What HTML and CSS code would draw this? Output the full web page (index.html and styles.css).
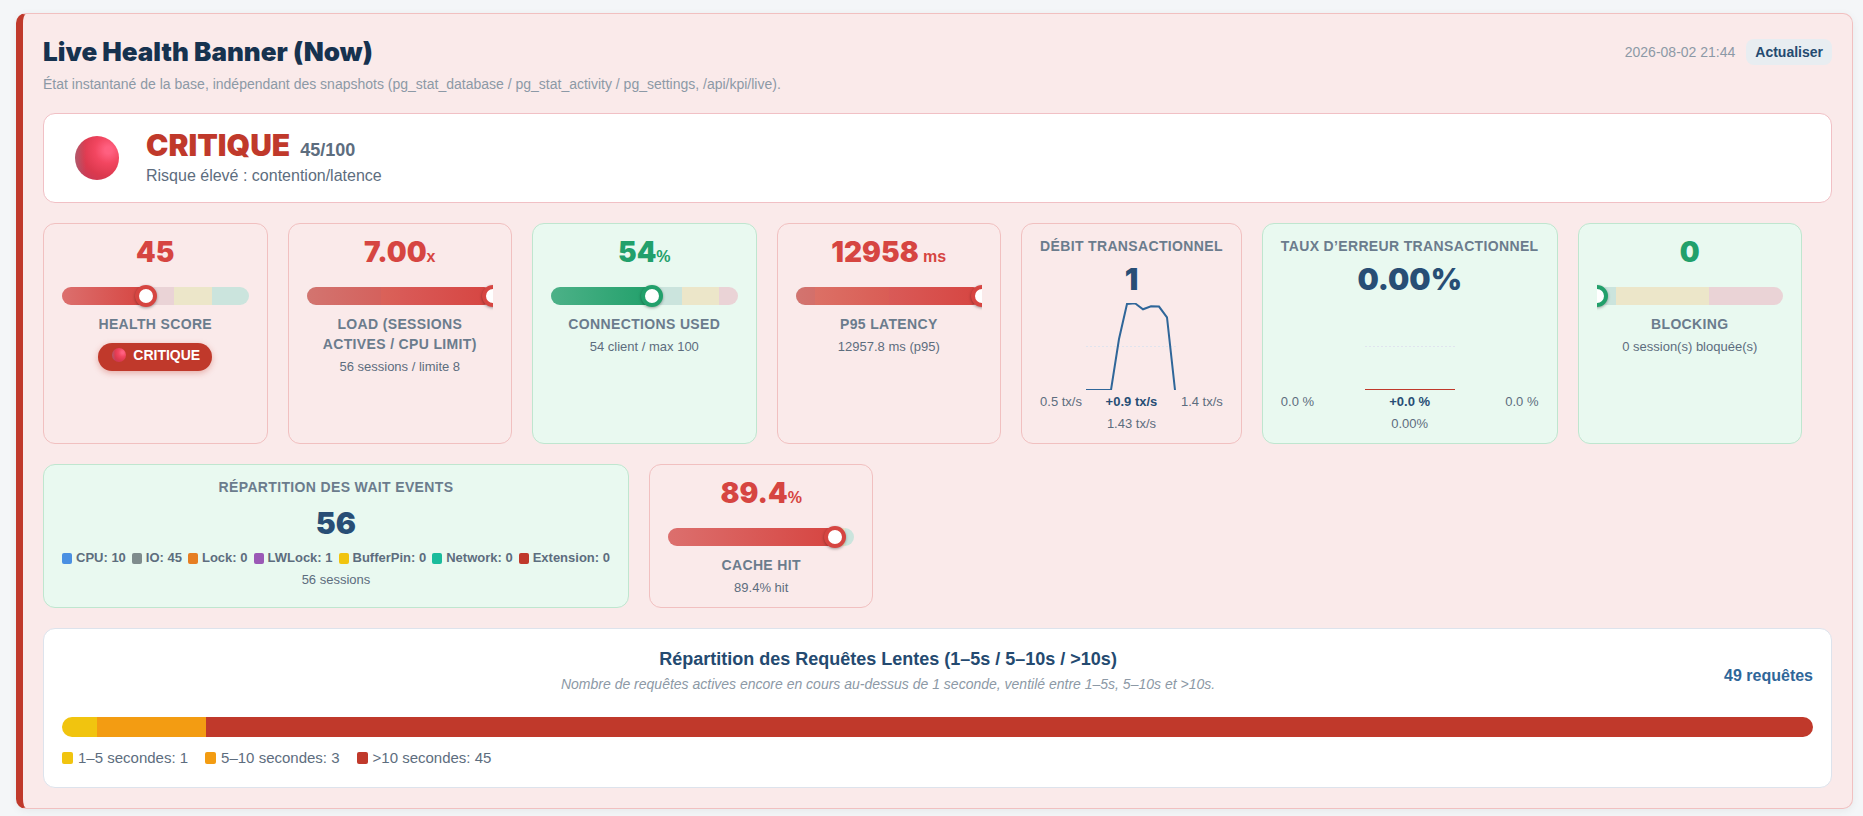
FILE: index.html
```html
<!DOCTYPE html>
<html lang="fr">
<head>
    <meta charset="UTF-8">
    <meta name="viewport" content="width=device-width, initial-scale=1.0">
    <title>Live Health Banner</title>
    <link rel="stylesheet" href="styles.css">
</head>
<body>
    <main class="banner">
        <header class="banner-header">
            <h1>Live Health Banner (Now)</h1>
            <div class="banner-actions">
                <span class="timestamp">2026-08-02 21:44</span>
                <button type="button" class="refresh-btn">Actualiser</button>
            </div>
        </header>
        <p class="banner-subtitle">État instantané de la base, indépendant des snapshots (pg_stat_database / pg_stat_activity / pg_settings, /api/kpi/live).</p>

        <section class="status">
            <div class="status-icon"><span class="orb"></span></div>
            <div>
                <div class="status-line"><span class="status-name">CRITIQUE</span> <span class="status-score">45/100</span></div>
                <div class="status-text">Risque élevé : contention/latence</div>
            </div>
        </section>

        <section class="cards">
            <article class="card gauge-card bad">
                <div class="value">45</div>
                <div class="gauge">
                    <div class="track zones-health"><div class="fill" style="width: 45%"></div></div>
                    <div class="knob" style="left: 45%"></div>
                </div>
                <h2 class="label">Health score</h2>
                <div class="pill"><span class="orb orb-small"></span>CRITIQUE</div>
            </article>

            <article class="card gauge-card bad">
                <div class="value">7.00<small>x</small></div>
                <div class="gauge">
                    <div class="track zones-load"><div class="fill" style="width: 100%"></div></div>
                    <div class="knob" style="left: 100%"></div>
                </div>
                <h2 class="label">Load (sessions actives / CPU limit)</h2>
                <div class="detail">56 sessions / limite 8</div>
            </article>

            <article class="card gauge-card good">
                <div class="value">54<small>%</small></div>
                <div class="gauge">
                    <div class="track zones-connections"><div class="fill" style="width: 54%"></div></div>
                    <div class="knob" style="left: 54%"></div>
                </div>
                <h2 class="label">Connections used</h2>
                <div class="detail">54 client / max 100</div>
            </article>

            <article class="card gauge-card bad">
                <div class="value">12958<small> ms</small></div>
                <div class="gauge">
                    <div class="track zones-latency"><div class="fill" style="width: 100%"></div></div>
                    <div class="knob" style="left: 100%"></div>
                </div>
                <h2 class="label">P95 latency</h2>
                <div class="detail">12957.8 ms (p95)</div>
            </article>

            <article class="card bad">
                <h2 class="label">Débit transactionnel</h2>
                <div class="total">1</div>
                <svg class="spark" width="90" height="87" viewBox="0 0 90 87">
                    <line class="spark-mid" x1="0" y1="43.5" x2="90" y2="43.5"/>
                    <polyline class="spark-line" points="0,87 25,87 33,36 41,1 49,0.3 57,6.3 65,3.2 73,3.6 81,14.5 89,87"/>
                </svg>
                <div class="spark-scale"><span>0.5 tx/s</span><strong>+0.9 tx/s</strong><span>1.4 tx/s</span></div>
                <div class="detail">1.43 tx/s</div>
            </article>

            <article class="card good">
                <h2 class="label">Taux d’erreur transactionnel</h2>
                <div class="total">0.00%</div>
                <svg class="spark" width="90" height="87" viewBox="0 0 90 87">
                    <line class="spark-mid" x1="0" y1="43.5" x2="90" y2="43.5"/>
                    <polyline class="spark-line spark-error" points="0,87 90,87"/>
                </svg>
                <div class="spark-scale"><span>0.0 %</span><strong>+0.0 %</strong><span>0.0 %</span></div>
                <div class="detail">0.00%</div>
            </article>

            <article class="card gauge-card good">
                <div class="value">0</div>
                <div class="gauge">
                    <div class="track zones-blocking"><div class="fill" style="width: 0%"></div></div>
                    <div class="knob" style="left: 0%"></div>
                </div>
                <h2 class="label">Blocking</h2>
                <div class="detail">0 session(s) bloquée(s)</div>
            </article>

            <article class="card waits-card good">
                <h2 class="label">Répartition des wait events</h2>
                <div class="total">56</div>
                <ul class="waits">
                    <li><i class="swatch blue"></i>CPU: 10</li>
                    <li><i class="swatch gray"></i>IO: 45</li>
                    <li><i class="swatch carrot"></i>Lock: 0</li>
                    <li><i class="swatch purple"></i>LWLock: 1</li>
                    <li><i class="swatch yellow"></i>BufferPin: 0</li>
                    <li><i class="swatch teal"></i>Network: 0</li>
                    <li><i class="swatch red"></i>Extension: 0</li>
                </ul>
                <div class="detail">56 sessions</div>
            </article>

            <article class="card gauge-card bad">
                <div class="value">89.4<small>%</small></div>
                <div class="gauge">
                    <div class="track zones-cache"><div class="fill" style="width: 89.4%"></div></div>
                    <div class="knob" style="left: 89.4%"></div>
                </div>
                <h2 class="label">Cache hit</h2>
                <div class="detail">89.4% hit</div>
            </article>
        </section>

        <section class="slow">
            <div class="slow-header">
                <div class="slow-titles">
                    <h2>Répartition des Requêtes Lentes (1–5s / 5–10s / &gt;10s)</h2>
                    <p>Nombre de requêtes actives encore en cours au-dessus de 1 seconde, ventilé entre 1–5s, 5–10s et &gt;10s.</p>
                </div>
                <div class="slow-total">49 requêtes</div>
            </div>
            <div class="slow-bar">
                <div class="yellow" style="width: 2%"></div>
                <div class="orange" style="width: 6.2%"></div>
                <div class="red" style="width: 91.8%"></div>
            </div>
            <ul class="slow-legend">
                <li><i class="swatch yellow"></i>1–5 secondes: 1</li>
                <li><i class="swatch orange"></i>5–10 secondes: 3</li>
                <li><i class="swatch red"></i>&gt;10 secondes: 45</li>
            </ul>
        </section>
    </main>
</body>
</html>
```

FILE: styles.css
```css
* {
    box-sizing: border-box;
}
body {
    margin: 0;
    padding: 13px 10px 7px 16px;
    background: #f4f6f8;
    color: #5d6d7e;
    font-family: "Liberation Sans", Arial, sans-serif;
    font-size: 14px;
}
h1, h2, p, ul {
    margin: 0;
    padding: 0;
}
ul {
    list-style: none;
}

/* Banner */
.banner {
    padding: 20px;
    background: #faeaea;
    border: 1px solid #f1c0c0;
    border-left: 7px solid #c0392b;
    border-radius: 10px;
    box-shadow: 0 2px 8px rgba(0, 0, 0, 0.06);
}
.banner-header {
    display: flex;
    justify-content: space-between;
    align-items: center;
}
.banner-header h1 {
    color: #16324f;
    font-family: Inter, sans-serif;
    font-size: 26px;
    font-weight: 900;
    line-height: 36px;
}
.banner-actions {
    display: flex;
    align-items: center;
    gap: 11px;
}
.timestamp {
    color: #8c99a6;
}
.refresh-btn {
    height: 26px;
    padding: 0 9px;
    border: none;
    border-radius: 8px;
    background: #e8edf1;
    color: #244a70;
    font: bold 14px "Liberation Sans", Arial, sans-serif;
    cursor: pointer;
}
.refresh-btn:hover {
    background: #dbe4eb;
}
.banner-subtitle {
    margin: 4px 0 19px;
    color: #8c99a6;
    line-height: 20px;
}

/* Overall status */
.status {
    display: flex;
    align-items: center;
    gap: 14px;
    padding: 14px 18px;
    background: #fff;
    border: 1px solid #f1c0c5;
    border-radius: 12px;
}
.status-icon {
    display: flex;
    justify-content: center;
    width: 70px;
}
.orb {
    width: 44px;
    height: 44px;
    border-radius: 50%;
    background:
        linear-gradient(to right, rgba(150, 120, 130, 0.5), rgba(150, 120, 130, 0) 25%),
        radial-gradient(circle at 76% 32%, #ff6080 8%, #f24660 30%, #dc394e 58%, #b83a5c 100%);
}
.status-line {
    display: flex;
    align-items: baseline;
    gap: 10px;
}
.status-name {
    color: #c0392b;
    font-family: Inter, sans-serif;
    font-size: 30px;
    font-weight: 900;
    line-height: 34px;
}
.status-score {
    font-size: 18px;
    font-weight: bold;
    line-height: 20px;
}
.status-text {
    margin-top: 2px;
    font-size: 16px;
    line-height: 24px;
}

/* KPI cards */
.cards {
    display: flex;
    flex-wrap: wrap;
    gap: 20px;
    margin: 20px 0;
}
.card {
    padding: 12px 18px 11px;
    border: 1px solid;
    border-radius: 12px;
    text-align: center;
}
.gauge-card {
    width: 12.55%;
}
.bad {
    --tone: #d64541;
    --tone-soft: rgba(214, 69, 65, 0.7);
    background: #faeaea;
    border-color: #f1c0c0;
}
.good {
    --tone: #22a06b;
    --tone-soft: rgba(34, 160, 107, 0.75);
    background: #e9f9f0;
    border-color: #bfe6cf;
}
.label {
    color: #6b7c8d;
    font-size: 14px;
    letter-spacing: 0.025em;
    line-height: 20px;
    text-transform: uppercase;
}
.value {
    color: var(--tone);
    font-family: Inter, sans-serif;
    font-size: 28px;
    font-weight: 900;
    line-height: 32px;
}
.value small {
    font-family: "Liberation Sans", Arial, sans-serif;
    font-size: 16px;
    font-weight: bold;
    line-height: 1;
}
.total {
    margin-top: 4px;
    color: #284e75;
    font-family: Inter, sans-serif;
    font-size: 30px;
    font-weight: 900;
    line-height: 38px;
}
.detail {
    margin-top: 4px;
    font-size: 13px;
    line-height: 17px;
}

/* Gauges */
.gauge {
    position: relative;
    height: 36px;
    margin-top: 10px;
    padding: 9px 0;
    overflow: hidden;
}
.track {
    --ok: #cbe4dd;
    --warn: #ece6c9;
    --crit: #ead3d6;
    height: 18px;
    border-radius: 9px;
    overflow: hidden;
}
.fill {
    height: 100%;
    background: linear-gradient(to right, var(--tone-soft), var(--tone));
}
.knob {
    position: absolute;
    top: 7px;
    width: 22px;
    height: 22px;
    margin-left: -11px;
    border: 4px solid var(--tone);
    border-radius: 50%;
    background: #fff;
    box-shadow: 0 1px 3px rgba(0, 0, 0, 0.35);
}
.zones-health {
    background: linear-gradient(to right, var(--crit) 60%, var(--warn) 60% 80%, var(--ok) 80%);
}
.zones-load {
    background: linear-gradient(to right, var(--ok) 40%, var(--warn) 40% 50%, var(--crit) 50%);
}
.zones-connections {
    background: linear-gradient(to right, var(--ok) 70%, var(--warn) 70% 90%, var(--crit) 90%);
}
.zones-latency {
    background: linear-gradient(to right, var(--ok) 10%, var(--warn) 10% 50%, var(--crit) 50%);
}
.zones-blocking {
    background: linear-gradient(to right, var(--ok) 10%, var(--warn) 10% 60%, var(--crit) 60%);
}
.zones-cache {
    background: linear-gradient(to right, var(--crit) 90%, var(--warn) 90% 95%, var(--ok) 95%);
}

.pill {
    display: inline-flex;
    align-items: center;
    gap: 7px;
    margin-top: 9px;
    padding: 4px 12px 8px 14px;
    border-radius: 14px;
    background: #c0392b;
    color: #fff;
    font-weight: bold;
    line-height: 16px;
    box-shadow: 0 2px 6px rgba(192, 57, 43, 0.35);
}
.orb-small {
    width: 14px;
    height: 14px;
}

/* Sparklines */
.spark {
    display: block;
    margin: 5px auto 3px;
}
.spark-mid {
    stroke: #e0e4ee;
    stroke-dasharray: 2 2;
}
.spark-line {
    fill: none;
    stroke: #2f6699;
    stroke-width: 2;
}
.spark-error {
    stroke: #c0392b;
}
.spark-scale {
    display: flex;
    justify-content: space-between;
    font-size: 13px;
    line-height: 18px;
}
.spark-scale strong {
    color: #284e75;
}

/* Legends */
.swatch {
    flex: none;
    width: 10px;
    height: 11px;
    border-radius: 2px;
}
.waits-card .total {
    margin-top: 7px;
}
.waits {
    display: flex;
    justify-content: center;
    gap: 6px;
    margin-top: 7px;
    font-size: 13px;
    font-weight: bold;
    line-height: 18px;
}
.waits li {
    display: flex;
    align-items: center;
    gap: 4px;
}
.blue {
    background: #4a90e2;
}
.gray {
    background: #7f8c8d;
}
.carrot {
    background: #e67e22;
}
.purple {
    background: #9b59b6;
}
.yellow {
    background: #f1c40f;
}
.teal {
    background: #1abc9c;
}
.orange {
    background: #f39c12;
}
.red {
    background: #c0392b;
}

/* Slow queries */
.slow {
    padding: 18px 18px 19px;
    background: #fff;
    border: 1px solid #dde3ec;
    border-radius: 12px;
}
.slow-header {
    display: flex;
    align-items: center;
    gap: 10px;
}
.slow-titles {
    flex: 1;
    text-align: center;
}
.slow-titles h2 {
    color: #244a70;
    font-size: 18px;
    line-height: 24px;
}
.slow-titles p {
    margin: 3px 0 10px;
    color: #8c99a6;
    font-style: italic;
    line-height: 20px;
}
.slow-total {
    color: #2f6699;
    font-size: 16px;
    font-weight: bold;
}
.slow-bar {
    display: flex;
    height: 20px;
    margin-top: 13px;
    border-radius: 10px;
    overflow: hidden;
}
.slow-legend {
    display: flex;
    gap: 17px;
    margin-top: 11px;
    font-size: 15px;
    line-height: 20px;
}
.slow-legend li {
    display: flex;
    align-items: center;
    gap: 5px;
}
.slow-legend .swatch {
    width: 11px;
    height: 12px;
}
```
